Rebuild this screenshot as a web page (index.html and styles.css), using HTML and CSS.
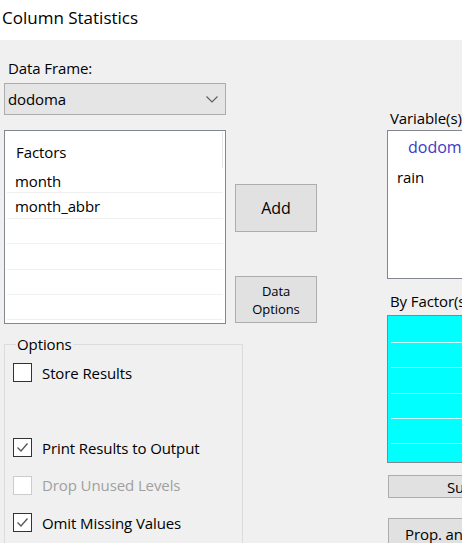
FILE: index.html
```html
<!DOCTYPE html>
<html>
<head>
<meta charset="utf-8">
<link rel="stylesheet" href="styles.css">
</head>
<body>
<div class="window">
  <div class="titlebar">Column Statistics</div>
  <div class="form">
    <div class="col-left">
      <div class="lbl df-label">Data Frame:</div>
      <div class="combo">
        <span>dodoma</span>
        <svg class="chev" width="12" height="7" viewBox="0 0 12 7"><path d="M0.5 0.5 L6 6 L11.5 0.5" fill="none" stroke="#606060" stroke-width="1.2"/></svg>
      </div>
      <div class="listview">
        <div class="lv-header"><span class="lv-col">Factors</span></div>
        <div class="lv-row">month</div>
        <div class="lv-row">month_abbr</div>
        <div class="lv-row"></div>
        <div class="lv-row"></div>
        <div class="lv-row"></div>
        <div class="lv-row"></div>
      </div>
      <fieldset class="group">
        <legend>Options</legend>
        <div class="chk-row"><span class="box"></span><span>Store Results</span></div>
        <div class="chk-row spacer"></div>
        <div class="chk-row"><span class="box checked"><svg width="13" height="11" viewBox="0 0 13 11"><path d="M1.5 5.5 L5 9 L11.5 1.5" fill="none" stroke="#5a5a5a" stroke-width="1.4"/></svg></span><span>Print Results to Output</span></div>
        <div class="chk-row disabled"><span class="box"></span><span>Drop Unused Levels</span></div>
        <div class="chk-row"><span class="box checked"><svg width="13" height="11" viewBox="0 0 13 11"><path d="M1.5 5.5 L5 9 L11.5 1.5" fill="none" stroke="#5a5a5a" stroke-width="1.4"/></svg></span><span>Omit Missing Values</span></div>
      </fieldset>
    </div>
    <div class="col-mid">
      <div class="btn btn-add">Add</div>
      <div class="btn btn-opts">Data<br>Options</div>
    </div>
    <div class="col-right">
      <div class="lbl var-label">Variable(s)</div>
      <div class="varbox">
        <div class="var-df">dodoma</div>
        <div class="var-item">rain</div>
      </div>
      <div class="lbl by-label">By Factor(s)</div>
      <div class="cyan-grid">
        <div class="cg-row first"></div>
        <div class="cg-row"></div>
        <div class="cg-row"></div>
        <div class="cg-row"></div>
        <div class="cg-row"></div>
        <div class="cg-row last"></div>
      </div>
      <div class="btn btn-sum">Summaries</div>
      <div class="btn btn-prop">Prop. and Percentages</div>
    </div>
  </div>
</div>
</body>
</html>
```

FILE: styles.css
```css
html, body {
  margin: 0;
  padding: 0;
  overflow: hidden;
}
body {
  width: 462px;
  height: 543px;
  font-family: "Open Sans", "Noto Sans", sans-serif;
  font-size: 15px;
  color: #000;
}
.window {
  display: flex;
  flex-direction: column;
  height: 543px;
}
.titlebar {
  height: 40px;
  background: #fff;
  font-size: 17px;
  line-height: 36px;
  padding-left: 2px;
  flex: none;
}
.form {
  flex: 1;
  background: #f0f0f0;
  display: flex;
  align-items: flex-start;
  padding-left: 4px;
  overflow: hidden;
}
.lbl {
  line-height: 20px;
  white-space: nowrap;
  letter-spacing: -0.1px;
}
.col-left {
  width: 222px;
  flex: none;
  display: flex;
  flex-direction: column;
}
.df-label {
  margin-top: 18px;
  padding-left: 4px;
}
.combo {
  margin-top: 5px;
  height: 32px;
  box-sizing: border-box;
  border: 1px solid #adadad;
  background: #e5e5e5;
  display: flex;
  align-items: center;
  justify-content: space-between;
  padding: 0 7px 0 3px;
  letter-spacing: -0.1px;
}
.chev { display: block; }
.listview {
  margin-top: 15px;
  height: 194px;
  box-sizing: border-box;
  border: 1px solid #828790;
  background: #fff;
  padding: 1px 2px 0 2px;
  overflow: hidden;
}
.lv-header {
  height: 36px;
  display: flex;
}
.lv-col {
  flex: 1;
  padding-left: 9px;
  line-height: 40px;
  border-right: 1px solid #e5e5e5;
  letter-spacing: -0.1px;
}
.lv-row {
  height: 25.4px;
  box-sizing: border-box;
  border-bottom: 1.5px solid #f0f0f0;
  padding-left: 8px;
  line-height: 26px;
  letter-spacing: -0.1px;
}
.group {
  margin: 10px 0 0 0;
  width: 239px;
  box-sizing: border-box;
  border: 1px solid #dcdcdc;
  padding: 0 0 0 8px;
  min-width: 0;
  height: 230px;
}
.group legend {
  padding: 0 1px;
  margin-left: 3px;
  line-height: 20px;
  letter-spacing: -0.1px;
}
.chk-row {
  height: 37.5px;
  display: flex;
  align-items: center;
  gap: 10px;
  letter-spacing: -0.1px;
  white-space: nowrap;
}
.chk-row.spacer:first-of-type { height: 37.5px; }
.box {
  width: 19px;
  height: 19px;
  box-sizing: border-box;
  border: 1.5px solid #333;
  background: #fff;
  display: flex;
  align-items: center;
  justify-content: center;
  flex: none;
}
.chk-row.disabled { color: #a0a0a0; }
.chk-row.disabled .box { border-color: #cccccc; }
.col-mid {
  width: 82px;
  flex: none;
  margin-left: 9px;
  display: flex;
  flex-direction: column;
}
.btn {
  box-sizing: border-box;
  border: 1px solid #adadad;
  background: #e1e1e1;
  display: flex;
  align-items: center;
  justify-content: center;
  text-align: center;
  letter-spacing: -0.1px;
  white-space: nowrap;
}
.btn-add {
  margin-top: 144px;
  height: 48px;
  font-size: 16px;
}
.btn-opts {
  margin-top: 44px;
  height: 47px;
  font-size: 13px;
  line-height: 18px;
}
.col-right {
  margin-left: 70px;
  width: 200px;
  flex: none;
  display: flex;
  flex-direction: column;
}
.var-label {
  margin-top: 68px;
  padding-left: 3px;
}
.varbox {
  margin-top: 2px;
  height: 149px;
  width: 130px;
  box-sizing: border-box;
  border: 1px solid #828790;
  background: #fff;
}
.var-df {
  color: #3b3bc7;
  padding-left: 20px;
  line-height: 20px;
  margin-top: 6px;
  font-size: 16px;
}
.var-item {
  padding-left: 9px;
  line-height: 20px;
  margin-top: 10px;
  letter-spacing: -0.1px;
}
.by-label {
  margin-top: 13px;
  padding-left: 3px;
  line-height: 18px;
}
.cyan-grid {
  margin-top: 5px;
  height: 148px;
  width: 130px;
  box-sizing: border-box;
  border: 1px solid #828790;
  background: #00ffff;
  padding-left: 3px;
}
.cg-row {
  height: 25.3px;
  border-bottom: 1.5px solid #c8ffff;
  box-sizing: border-box;
}
.cg-row.first { height: 27px; }
.cg-row.last { border-bottom: none; }
.btn-sum {
  margin-top: 12px;
  margin-left: 1px;
  height: 23px;
  width: 196px;
}
.btn-prop {
  margin-top: 20px;
  margin-left: 1px;
  height: 30px;
  width: 196px;
  justify-content: flex-start;
  align-items: flex-start;
  padding-top: 5px;
  padding-left: 16px;
}
```
